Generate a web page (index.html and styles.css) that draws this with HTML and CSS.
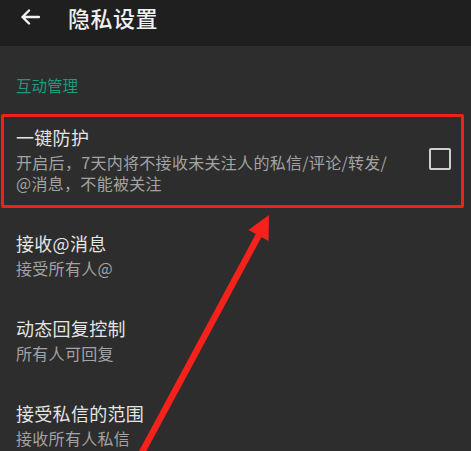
FILE: index.html
```html
<!DOCTYPE html>
<html lang="zh-CN">

<head>
    <meta charset="UTF-8">
    <meta name="viewport" content="width=device-width, initial-scale=1.0">
    <title>隐私设置</title>
    <link rel="stylesheet" href="styles.css">
</head>

<body>
    <header class="top-bar">
        <svg class="back-icon" width="20" height="16" viewBox="0 0 20 16">
            <path d="M19 8H2.5M9 1.5L2.5 8L9 14.5" fill="none" stroke="#f2f2f2" stroke-width="2.4" stroke-linecap="round" stroke-linejoin="round" />
        </svg>
        <h1 class="top-title">隐私设置</h1>
    </header>

    <main class="settings">
        <div class="section-label">互动管理</div>

        <div class="row">
            <div class="row-text">
                <div class="row-title">一键防护</div>
                <div class="row-sub">开启后，7天内将不接收未关注人的私信/评论/转发/<br>@消息，不能被关注</div>
            </div>
            <span class="checkbox"></span>
        </div>

        <div class="row">
            <div class="row-text">
                <div class="row-title">接收@消息</div>
                <div class="row-sub">接受所有人@</div>
            </div>
        </div>

        <div class="row">
            <div class="row-text">
                <div class="row-title">动态回复控制</div>
                <div class="row-sub">所有人可回复</div>
            </div>
        </div>

        <div class="row">
            <div class="row-text">
                <div class="row-title">接受私信的范围</div>
                <div class="row-sub">接收所有人私信</div>
            </div>
        </div>
    </main>

    <!-- annotation overlay -->
    <div class="mark-box"></div>
    <svg class="mark-arrow" width="471" height="451" viewBox="0 0 471 451">
        <line x1="140" y1="456" x2="260" y2="233" stroke="#f5211b" stroke-width="6.5" />
        <polygon points="269,215 248.5,230 268.5,241" fill="#f5211b" />
    </svg>
</body>

</html>
```

FILE: styles.css
```css
body {
    margin: 0;
    width: 471px;
    height: 451px;
    overflow: hidden;
    position: relative;
    background-color: #2d2d2d;
    font-family: "Noto Sans CJK SC", "Noto Sans", sans-serif;
}

.top-bar {
    display: flex;
    align-items: center;
    height: 33px;
    padding: 0 0 13px 20px;
    background-color: #1f1f1f;
}

.back-icon {
    flex-shrink: 0;
}

.top-title {
    margin: 0 0 0 28px;
    font-size: 22px;
    font-weight: 500;
    letter-spacing: 0.5px;
    color: #f0f0f0;
    line-height: 30px;
}

.settings {
    display: flex;
    flex-direction: column;
}

.section-label {
    margin-top: 29px;
    padding: 0 16px 11px;
    font-size: 15.5px;
    line-height: 20px;
    color: #1c9a7f;
}

.row {
    display: flex;
    align-items: center;
    padding: 18px 20px 18px 16px;
}

.row-text {
    flex: 1;
}

.row-title {
    font-size: 18px;
    line-height: 26px;
    letter-spacing: 0.3px;
    color: #e4e4e4;
}

.row-sub {
    margin-top: 2px;
    font-size: 16px;
    line-height: 21px;
    letter-spacing: 0.3px;
    color: #a3a3a3;
}

.checkbox {
    width: 18px;
    height: 18px;
    border: 2px solid #cfcfcf;
    border-radius: 2px;
    margin-bottom: 1px;
}

/* -- red annotation -- */

.mark-box {
    position: absolute;
    left: 1px;
    top: 114px;
    width: 457px;
    height: 88px;
    border: 3px solid #f0201a;
    border-radius: 2px;
}

.mark-arrow {
    position: absolute;
    left: 0;
    top: 0;
}
```
